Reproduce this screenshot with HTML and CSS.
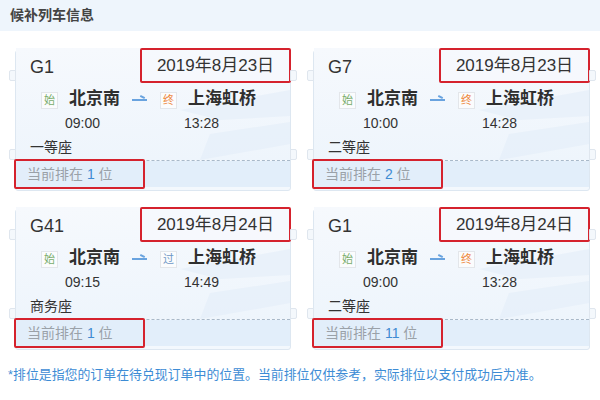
FILE: index.html
```html
<!DOCTYPE html>
<html lang="zh-CN">
<head>
  <meta charset="UTF-8">
  <title>候补列车信息</title>
  <link rel="stylesheet" href="styles.css">
</head>
<body>
  <div class="header">候补列车信息</div>

  <div class="cards">
    <div class="card">
      <div class="card-top">
        <svg class="wm" width="120" height="80" viewBox="0 0 120 80"><polygon points="10,28 120,8 120,34 50,38" /><polygon points="40,52 120,40 120,62 30,78" /></svg>
        <div class="head"><span class="train">G1</span><span class="date mark">2019年8月23日</span></div>
        <div class="route">
          <span class="badge start">始</span><span class="st">北京南</span>
          <span class="arrow"></span>
          <span class="badge end">终</span><span class="st">上海虹桥</span>
        </div>
        <div class="times"><span>09:00</span><span>13:28</span></div>
        <div class="seat">一等座</div>
      </div>
      <div class="card-bottom"><span class="rank mark">当前排在 <b>1</b> 位</span></div>
    </div>

    <div class="card">
      <div class="card-top">
        <svg class="wm" width="120" height="80" viewBox="0 0 120 80"><polygon points="10,28 120,8 120,34 50,38" /><polygon points="40,52 120,40 120,62 30,78" /></svg>
        <div class="head"><span class="train">G7</span><span class="date mark">2019年8月23日</span></div>
        <div class="route">
          <span class="badge start">始</span><span class="st">北京南</span>
          <span class="arrow"></span>
          <span class="badge end">终</span><span class="st">上海虹桥</span>
        </div>
        <div class="times"><span>10:00</span><span>14:28</span></div>
        <div class="seat">二等座</div>
      </div>
      <div class="card-bottom"><span class="rank mark">当前排在 <b>2</b> 位</span></div>
    </div>

    <div class="card">
      <div class="card-top">
        <svg class="wm" width="120" height="80" viewBox="0 0 120 80"><polygon points="10,28 120,8 120,34 50,38" /><polygon points="40,52 120,40 120,62 30,78" /></svg>
        <div class="head"><span class="train">G41</span><span class="date mark">2019年8月24日</span></div>
        <div class="route">
          <span class="badge start">始</span><span class="st">北京南</span>
          <span class="arrow"></span>
          <span class="badge pass">过</span><span class="st">上海虹桥</span>
        </div>
        <div class="times"><span>09:15</span><span>14:49</span></div>
        <div class="seat">商务座</div>
      </div>
      <div class="card-bottom"><span class="rank mark">当前排在 <b>1</b> 位</span></div>
    </div>

    <div class="card">
      <div class="card-top">
        <svg class="wm" width="120" height="80" viewBox="0 0 120 80"><polygon points="10,28 120,8 120,34 50,38" /><polygon points="40,52 120,40 120,62 30,78" /></svg>
        <div class="head"><span class="train">G1</span><span class="date mark">2019年8月24日</span></div>
        <div class="route">
          <span class="badge start">始</span><span class="st">北京南</span>
          <span class="arrow"></span>
          <span class="badge end">终</span><span class="st">上海虹桥</span>
        </div>
        <div class="times"><span>09:00</span><span>13:28</span></div>
        <div class="seat">二等座</div>
      </div>
      <div class="card-bottom"><span class="rank mark">当前排在 <b>11</b> 位</span></div>
    </div>
  </div>

  <p class="note">*排位是指您的订单在待兑现订单中的位置。当前排位仅供参考，实际排位以支付成功后为准。</p>
</body>
</html>
```

FILE: styles.css
```css
body {
  margin: 0;
  background: #fff;
  font-family: "Liberation Sans", "Noto Sans CJK SC", sans-serif;
  color: #333;
}

.header {
  height: 31px;
  line-height: 30px;
  padding-left: 10px;
  background: #eef5fc;
  font-size: 14px;
  font-weight: bold;
  color: #444;
}

.cards {
  display: grid;
  grid-template-columns: 276px 277px;
  column-gap: 22px;
  row-gap: 18px;
  padding: 19px 0 0 15px;
}

.card {
  position: relative;
  height: 139px;
  border: 1px solid #dde7f1;
  border-radius: 3px;
  background: #f3f8fd;
}

.card-top {
  position: relative;
  height: 112px;
  padding: 0 0 0 14px;
  background: linear-gradient(180deg, #f6f9fd 0%, #eef5fc 100%);
  border-bottom: 1px dashed #a9b9c9;
}

.card-top::before,
.card-top::after,
.card-bottom::before,
.card-bottom::after {
  content: "";
  position: absolute;
  width: 5px;
  height: 9px;
  background: #f4f8fc;
  border: 1px solid #dfe6ee;
}

.card-top::before { left: -7px; top: 22px; border-radius: 2px 0 0 2px; }
.card-top::after { right: -7px; top: 22px; border-radius: 0 2px 2px 0; }
.card-bottom::before { left: -7px; top: -12px; border-radius: 2px 0 0 2px; }
.card-bottom::after { right: -7px; top: -12px; border-radius: 0 2px 2px 0; }

.wm {
  position: absolute;
  right: 0;
  top: 34px;
  fill: #e4eef9;
  opacity: 0.6;
}

.head {
  position: relative;
  display: flex;
  justify-content: space-between;
  align-items: center;
  height: 35px;
  margin-top: -3px;
}

.train {
  font-size: 18px;
  line-height: 20px;
  padding-top: 2px;
}

.mark {
  border: 2px solid #d5222d;
  border-radius: 2px;
  box-sizing: border-box;
}

.date {
  width: 151px;
  height: 35px;
  margin-right: -1px;
  line-height: 31px;
  text-align: center;
  font-size: 17px;
  background: rgba(246, 249, 253, 0.6);
}

.route {
  position: relative;
  display: flex;
  align-items: center;
  height: 20px;
  margin-top: 6px;
  padding-left: 11px;
}

.badge {
  width: 15px;
  height: 15px;
  line-height: 15px;
  text-align: center;
  font-size: 11px;
  background: #fbfcfd;
  border: 1px solid #e3e6ea;
  margin-top: 3px;
}

.start { color: #79ad6c; }
.end { color: #ee8a3e; }
.pass { color: #6f98c6; }

.st {
  font-size: 17px;
  font-weight: bold;
  line-height: 20px;
  margin-left: 11px;
  color: #2f2f2f;
}

.arrow {
  position: relative;
  width: 15px;
  height: 2px;
  margin: 2px 13px 0 12px;
  background: #69a3df;
}

.arrow::after {
  content: "";
  position: absolute;
  right: 2px;
  top: -3px;
  width: 5px;
  height: 2px;
  background: #69a3df;
  transform: rotate(28deg);
}

.times {
  position: relative;
  display: flex;
  height: 18px;
  line-height: 18px;
  margin-top: 5px;
  padding-left: 35px;
  font-size: 14px;
}

.times span:first-child { width: 119px; }

.seat {
  position: relative;
  height: 18px;
  line-height: 18px;
  margin-top: 6px;
  font-size: 14px;
}

.card-bottom {
  position: relative;
  height: 26px;
  background: #e2eefa;
}

.rank {
  position: absolute;
  left: -2px;
  top: -2px;
  width: 131px;
  height: 30px;
  line-height: 26px;
  padding-left: 11px;
  font-size: 14px;
  color: #9aa1a8;
}

.rank b {
  font-weight: normal;
  color: #3f8bd3;
}

.note {
  margin: 16px 0 0 8px;
  font-size: 12.9px;
  line-height: 18px;
  color: #3d8cd5;
}
```
